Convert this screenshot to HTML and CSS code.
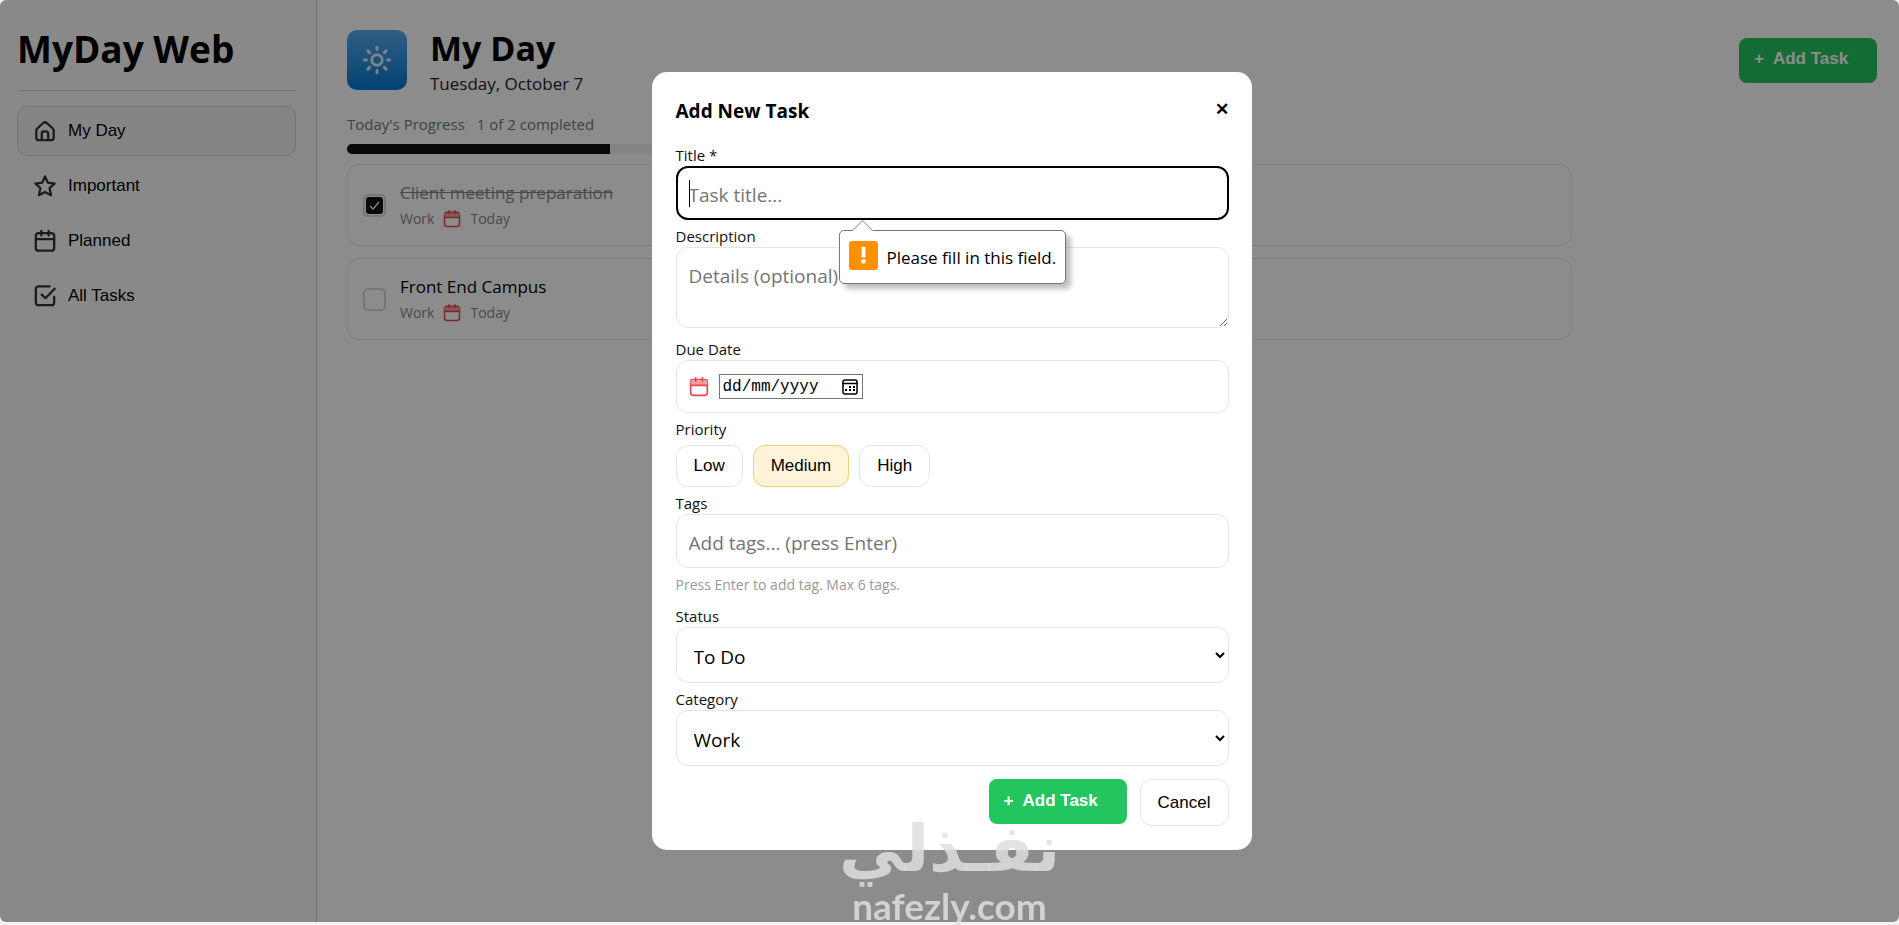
FILE: index.html
```
<!DOCTYPE html>
<html lang="en">
<head>
    <meta charset="UTF-8">
    <meta name="viewport" content="width=device-width, initial-scale=1.0">
    <title>MyDay Web</title>
    <link rel="stylesheet" href="styles.css">
</head>
<body>
    <div class="app">
        <aside class="sidebar">
            <h1 class="brand">MyDay Web</h1>
            <nav class="menu">
                <button class="menu-item active" type="button">
                    <svg class="icon" viewBox="0 0 24 24"><path d="M2.500 11.500a3 3 0 0 1 1-2.200l6.500-6a3 3 0 0 1 4 0l6.500 6a3 3 0 0 1 1 2.200V19a3 3 0 0 1-3 3h-13a3 3 0 0 1-3-3z"/><path d="M8.500 22v-7a2.500 2.500 0 0 1 2.500-2.500h2a2.500 2.500 0 0 1 2.500 2.500v7"/></svg>
                    My Day
                </button>
                <button class="menu-item" type="button">
                    <svg class="icon" viewBox="0 0 24 24"><path d="m12 1.500 3 6.800 7.500 1-5.500 5 1.600 7.700L12 18.500 5.400 22 7 14.300l-5.500-5 7.500-1z"/></svg>
                    Important
                </button>
                <button class="menu-item" type="button">
                    <svg class="icon" viewBox="0 0 24 24"><rect x="2" y="3.500" width="20" height="19" rx="3"/><path d="M8 1v5M16 1v5M2 10h20"/></svg>
                    Planned
                </button>
                <button class="menu-item" type="button">
                    <svg class="icon" viewBox="0 0 24 24"><path d="M22 13v6a3 3 0 0 1-3 3H5a3 3 0 0 1-3-3V4.500a3 3 0 0 1 3-3h12"/><path d="m8.500 10.500 4 4L22.500 4"/></svg>
                    All Tasks
                </button>
            </nav>
        </aside>

        <main class="main">
            <header class="header">
                <div class="day-icon">
                    <svg viewBox="0 0 24 24"><circle cx="12" cy="12" r="4.500"/><path d="M12 1v2M12 21v2M1 12h2M21 12h2M4.200 4.200l1.500 1.500M18.300 18.300l1.500 1.500M4.200 19.800l1.500-1.500M18.300 5.700l1.500-1.500"/></svg>
                </div>
                <div class="day-text">
                    <h2>My Day</h2>
                    <p>Tuesday, October 7</p>
                </div>
                <button class="btn-add" type="button"><span>+</span>Add Task</button>
            </header>

            <div class="progress-text"><span>Today's Progress</span><span>1 of 2 completed</span></div>
            <div class="progress"><div class="progress-fill" style="width: 50%"></div></div>

            <ul class="tasks">
                <li class="task done">
                    <input type="checkbox" id="task1" checked>
                    <div>
                        <label for="task1">Client meeting preparation</label>
                        <div class="meta">Work
                            <svg class="cal" viewBox="0 0 24 24"><rect x="2" y="3" width="20" height="19" rx="3"/><path class="cal-top" d="M2 4h20v6H2z"/><path d="M8 1v4M16 1v4M2 10h20"/></svg>
                            Today</div>
                    </div>
                </li>
                <li class="task">
                    <input type="checkbox" id="task2">
                    <div>
                        <label for="task2">Front End Campus</label>
                        <div class="meta">Work
                            <svg class="cal" viewBox="0 0 24 24"><rect x="2" y="3" width="20" height="19" rx="3"/><path class="cal-top" d="M2 4h20v6H2z"/><path d="M8 1v4M16 1v4M2 10h20"/></svg>
                            Today</div>
                    </div>
                </li>
            </ul>
        </main>
    </div>

    <!-- Add task dialog -->
    <div class="overlay">
        <form class="modal">
            <div class="modal-head">
                <h3>Add New Task</h3>
                <button class="close" type="button" aria-label="Close">✕</button>
            </div>

            <label for="title">Title *</label>
            <div class="title-wrap">
                <input class="field focused" id="title" type="text" placeholder="Task title...">
                <span class="caret"></span>
                <div class="tooltip">
                    <span class="warn">
                        <svg viewBox="0 0 30 30"><path d="M13 6h4v11h-4z"/><circle cx="15" cy="21" r="2.500"/></svg>
                    </span>
                    Please fill in this field.
                </div>
            </div>

            <label for="desc">Description</label>
            <textarea class="field" id="desc" placeholder="Details (optional)"></textarea>

            <label for="due">Due Date</label>
            <div class="date-row">
                <svg class="cal" viewBox="0 0 24 24"><rect x="2" y="3" width="20" height="19" rx="3"/><path class="cal-top" d="M2 4h20v6H2z"/><path d="M8 1v4M16 1v4M2 10h20"/></svg>
                <div class="date-box">
                    <input id="due" type="text" placeholder="dd/mm/yyyy">
                    <svg class="picker" viewBox="0 0 16 16"><rect x="1" y="1" width="14" height="14" rx="2"/><path d="M1 4.500h14"/><path class="dots" d="M7 7h2v2H7zM11 7h2v2h-2zM3 10h2v2H3zM7 10h2v2H7zM11 10h2v2h-2z"/></svg>
                </div>
            </div>

            <span class="label">Priority</span>
            <div class="priority">
                <button class="btn" type="button">Low</button>
                <button class="btn medium" type="button">Medium</button>
                <button class="btn" type="button">High</button>
            </div>

            <label for="tags">Tags</label>
            <input class="field" id="tags" type="text" placeholder="Add tags... (press Enter)">
            <small class="help">Press Enter to add tag. Max 6 tags.</small>

            <label for="status">Status</label>
            <select class="field" id="status">
                <option>To Do</option>
                <option>In Progress</option>
                <option>Done</option>
            </select>

            <label for="category">Category</label>
            <select class="field" id="category">
                <option>Work</option>
                <option>Personal</option>
            </select>

            <div class="actions">
                <button class="btn-add" type="button"><span>+</span>Add Task</button>
                <button class="btn cancel" type="button">Cancel</button>
            </div>
        </form>
    </div>

    <div class="watermark">
        <span class="mark-ar" lang="ar" dir="rtl">نفـذلي</span>
        <span class="mark-en">nafezly.com</span>
    </div>
</body>
</html>
```

FILE: styles.css
```
* {
    box-sizing: border-box;
}

body {
    margin: 0;
    height: 100vh;
    padding-bottom: 3px;
    background: #f3f3f3;
    color: #000;
    font-family: "Open Sans", "Noto Sans", sans-serif;
    overflow: hidden;
}

h1, h2, h3, p, ul {
    margin: 0;
    padding: 0;
}

button {
    font-family: "Liberation Sans", Arial, sans-serif;
    cursor: pointer;
}

svg {
    fill: none;
    stroke: currentColor;
    stroke-width: 2;
    stroke-linecap: round;
    stroke-linejoin: round;
    flex: none;
}

.app {
    display: flex;
    height: 100%;
    background: #fff;
    border-radius: 6px;
}

/* Sidebar */
.sidebar {
    width: 317px;
    padding: 20px 20px 20px 17px;
    background: #fafafa;
    border-right: 1px solid #d0d0d0;
    border-radius: 6px 0 0 6px;
}

.brand {
    height: 71px;
    font-size: 37px;
    line-height: 58px;
    border-bottom: 1px solid #d4d4d4;
}

.menu {
    display: flex;
    flex-direction: column;
    gap: 5px;
    margin-top: 15px;
}

.menu-item {
    display: flex;
    align-items: center;
    gap: 12px;
    height: 50px;
    padding: 0 16px;
    border: 1px solid transparent;
    border-radius: 10px;
    background: none;
    font-size: 17px;
    text-align: left;
}

.menu-item.active {
    background: #f3f3f3;
    border-color: #d4d4d4;
}

.icon {
    width: 22px;
    height: 22px;
    color: #333;
    stroke-width: 2.5;
}

/* Main column */
.main {
    flex: 1;
    padding: 24px 22px 0 30px;
}

.header {
    display: flex;
    align-items: center;
}

.day-icon {
    display: flex;
    align-items: center;
    justify-content: center;
    width: 60px;
    height: 60px;
    border-radius: 10px;
    background: linear-gradient(#5aaef0, #0078d4);
    color: #e6ecf2;
}

.day-icon svg {
    width: 28px;
    height: 28px;
    stroke-width: 2.5;
}

.day-text {
    flex: 1;
    margin-left: 23px;
}

.day-text h2 {
    font-size: 34px;
    line-height: 48px;
}

.day-text p {
    font-size: 17px;
    line-height: 24px;
    color: #222;
}

.btn-add {
    display: flex;
    align-items: center;
    width: 138px;
    height: 45px;
    padding: 0 15px 2px;
    gap: 9px;
    border: 0;
    border-radius: 8px;
    background: #22c55e;
    color: #fff;
    font-size: 17px;
    font-weight: bold;
}

.progress-text {
    display: flex;
    gap: 12px;
    margin-top: 16px;
    font-size: 15px;
    line-height: 24px;
    color: #777;
}

.progress {
    width: 526px;
    height: 10px;
    margin: 8px 0 10px;
    border-radius: 5px;
    background: #f0f0f0;
    overflow: hidden;
}

.progress-fill {
    height: 100%;
    background: #0f0f0f;
}

.tasks {
    display: flex;
    flex-direction: column;
    gap: 12px;
    max-width: 1225px;
    list-style: none;
}

.task {
    display: flex;
    align-items: center;
    gap: 14px;
    height: 82px;
    padding: 0 15px;
    border: 1px solid #e8e8e8;
    border-radius: 12px;
    font-size: 17px;
}

.task input {
    appearance: none;
    width: 23px;
    height: 23px;
    margin: 0;
    border: 2px solid #d4d8de;
    border-radius: 5px;
}

.task input:checked {
    background: url("data:image/svg+xml,%3Csvg xmlns='http://www.w3.org/2000/svg' viewBox='0 0 17 17'%3E%3Crect width='17' height='17' rx='3' fill='%23111'/%3E%3Cpath d='M4 9l3 3 6-7' fill='none' stroke='%23fff' stroke-width='1.2'/%3E%3C/svg%3E") center / 17px no-repeat;
}

.task label {
    display: block;
    line-height: 28px;
}

.task.done label {
    color: #888;
    text-decoration: line-through;
}

.meta {
    display: flex;
    align-items: center;
    gap: 9px;
    font-size: 14px;
    line-height: 24px;
    color: #888;
}

.cal {
    width: 18px;
    height: 18px;
    color: #e5484d;
}

.cal-top {
    fill: #f0a0a3;
    stroke: none;
}

/* Dialog */
.overlay {
    position: fixed;
    inset: 0 0 3px;
    display: flex;
    align-items: center;
    justify-content: center;
    padding-left: 4px;
    border-radius: 6px;
    background: rgba(0, 0, 0, 0.45);
}

.modal {
    display: flex;
    flex-direction: column;
    width: 600px;
    padding: 24px 23px 24px 24px;
    border-radius: 15px;
    background: #fff;
}

.modal-head {
    display: flex;
    align-items: center;
    justify-content: space-between;
    height: 30px;
    margin-bottom: 19px;
}

.modal h3 {
    font-size: 19px;
}

.close {
    padding: 0 0 3px;
    border: 0;
    background: none;
    font-size: 17px;
    font-weight: bold;
}

.modal label,
.label {
    font-size: 15px;
    line-height: 21px;
    color: #111;
}

.field {
    width: 100%;
    height: 54px;
    margin-bottom: 6px;
    padding: 3px 12px 0;
    border: 1px solid #e5e5e5;
    border-radius: 12px;
    background: #fff;
    color: #000;
    font-family: inherit;
    font-size: 19px;
}

.field::placeholder {
    color: #757575;
}

.focused {
    padding: 3px 11px 0;
    border: 2px solid #000;
}

textarea.field {
    height: 81px;
    margin-bottom: 11px;
    padding: 15px 12px;
}

select.field {
    height: 56px;
    padding: 4px 13px 0;
}

.title-wrap {
    position: relative;
}

.caret {
    position: absolute;
    top: 14px;
    left: 13px;
    width: 1px;
    height: 27px;
    background: #000;
}

.tooltip {
    position: absolute;
    top: 64px;
    left: 163px;
    display: flex;
    align-items: center;
    gap: 9px;
    height: 54px;
    padding: 0 9px;
    border: 1px solid #767676;
    border-radius: 5px;
    background: #fff;
    box-shadow: 5px 5px 5px rgba(0, 0, 0, 0.25);
    font-size: 17px;
    white-space: nowrap;
}

/* little arrow pointing at the field */
.tooltip::before {
    content: "";
    position: absolute;
    top: -8px;
    left: 15px;
    width: 14px;
    height: 14px;
    border-top: 1px solid #999;
    border-left: 1px solid #999;
    background: #fff;
    transform: rotate(45deg);
}

.warn {
    width: 29px;
    height: 29px;
    margin-bottom: 4px;
    border-radius: 3px;
    background: #ff9100;
}

.warn svg {
    display: block;
    fill: #fff;
    stroke: none;
}

.date-row {
    display: flex;
    align-items: center;
    gap: 10px;
    height: 53px;
    margin-bottom: 6px;
    padding: 0 12px;
    border: 1px solid #e5e5e5;
    border-radius: 12px;
}

.date-row .cal {
    width: 20px;
    height: 20px;
}

.date-box {
    display: flex;
    align-items: center;
    width: 144px;
    height: 25px;
    padding: 0 4px 0 3px;
    border: 1px solid #767676;
}

.date-box input {
    flex: 1;
    min-width: 0;
    padding: 0;
    border: 0;
    font-family: "Liberation Mono", monospace;
    font-size: 16px;
}

.date-box input::placeholder {
    color: #000;
}

.picker {
    width: 16px;
    height: 16px;
    stroke-width: 1.5;
}

.dots {
    fill: #000;
    stroke: none;
}

.priority {
    display: flex;
    gap: 10px;
    margin: 5px 0 6px;
}

.btn {
    height: 42px;
    padding: 0 17px;
    border: 1px solid #e5e5e5;
    border-radius: 12px;
    background: #fff;
    color: #000;
    font-size: 17px;
}

.medium {
    border-color: #f0d070;
    background: #fff4d9;
}

.help {
    margin: 0 0 10px;
    font-size: 14px;
    line-height: 22px;
    color: #999;
}

.actions {
    display: flex;
    justify-content: flex-end;
    gap: 13px;
    margin-top: 7px;
}

.cancel {
    height: 47px;
}

/* Watermark */
.watermark {
    position: fixed;
    bottom: 0;
    left: 0;
    right: 0;
    display: flex;
    flex-direction: column;
    align-items: center;
    color: rgba(222, 222, 222, 0.85);
    font-weight: bold;
    pointer-events: none;
}

.mark-ar {
    font-family: "DejaVu Sans", sans-serif;
    font-size: 65px;
    line-height: 76px;
}

.mark-en {
    font-family: Lato, sans-serif;
    font-size: 37px;
    line-height: 38px;
}
```
